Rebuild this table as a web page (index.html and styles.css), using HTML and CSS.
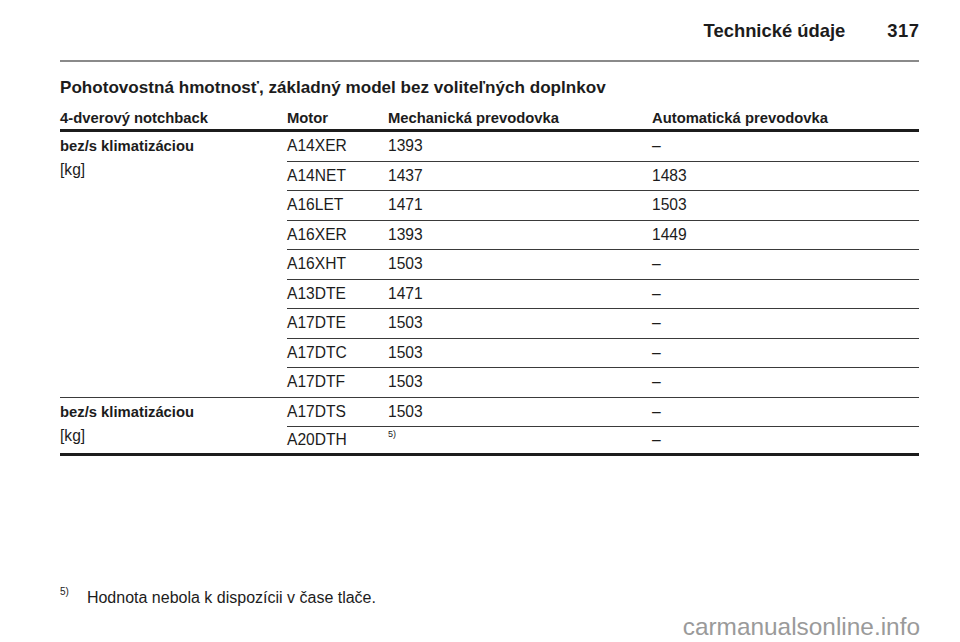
FILE: index.html
```html
<!DOCTYPE html>
<html lang="sk">
<head>
<meta charset="utf-8">
<title>Technické údaje 317</title>
<link rel="stylesheet" href="styles.css">
</head>
<body>
<div class="page">
  <header class="running-head">
    <span class="chapter">Technické údaje</span>
    <span class="pageno">317</span>
  </header>
  <h2 class="title">Pohotovostná hmotnosť, základný model bez voliteľných doplnkov</h2>
  <table class="weights">
    <thead>
      <tr>
        <th class="c1">4-dverový notchback</th>
        <th class="c2">Motor</th>
        <th class="c3">Mechanická prevodovka</th>
        <th class="c4">Automatická prevodovka</th>
      </tr>
    </thead>
    <tbody>
      <tr>
        <td class="c1 group" rowspan="9"><div class="lbl">bez/s klimatizáciou</div><div class="unit">[kg]</div></td>
        <td>A14XER</td><td>1393</td><td>–</td>
      </tr>
      <tr><td>A14NET</td><td>1437</td><td>1483</td></tr>
      <tr><td>A16LET</td><td>1471</td><td>1503</td></tr>
      <tr><td>A16XER</td><td>1393</td><td>1449</td></tr>
      <tr><td>A16XHT</td><td>1503</td><td>–</td></tr>
      <tr><td>A13DTE</td><td>1471</td><td>–</td></tr>
      <tr><td>A17DTE</td><td>1503</td><td>–</td></tr>
      <tr><td>A17DTC</td><td>1503</td><td>–</td></tr>
      <tr><td>A17DTF</td><td>1503</td><td>–</td></tr>
      <tr>
        <td class="c1 group last" rowspan="2"><div class="lbl">bez/s klimatizáciou</div><div class="unit">[kg]</div></td>
        <td>A17DTS</td><td>1503</td><td>–</td>
      </tr>
      <tr class="last-row"><td>A20DTH</td><td><sup class="fn">5)</sup></td><td>–</td></tr>
    </tbody>
  </table>
  <div class="spacer"></div>
  <footer class="footnote">
    <sup class="fn">5)</sup><span>Hodnota nebola k dispozícii v čase tlače.</span>
  </footer>
  <div class="watermark">carmanualsonline.info</div>
</div>
</body>
</html>
```

FILE: styles.css
```css
html, body {
  margin: 0;
  padding: 0;
  background: #ffffff;
}

body {
  font-family: "Liberation Sans", Arial, Helvetica, sans-serif;
  color: #1c1c1c;
  width: 960px;
  height: 642px;
  overflow: hidden;
}

.page {
  position: relative;
  height: 642px;
  padding: 0 41px 0 60px;
  box-sizing: border-box;
  display: flex;
  flex-direction: column;
}

.running-head {
  display: flex;
  justify-content: flex-end;
  align-items: baseline;
  gap: 42px;
  height: 62px;
  box-sizing: border-box;
  padding-top: 20px;
  border-bottom: 2px solid #8a8a8a;
  font-weight: bold;
  font-size: 18.4px;
  line-height: 22px;
}

.running-head .pageno {
  letter-spacing: 0.5px;
  margin-right: -0.5px;
}

.title {
  margin: 15px 0 0 0;
  font-size: 17.1px;
  line-height: 22px;
  font-weight: bold;
}

.weights {
  width: 100%;
  border-collapse: separate;
  border-spacing: 0;
  font-size: 15.6px;
  line-height: 18px;
  table-layout: fixed;
}

.weights th,
.weights td {
  box-sizing: border-box;
  padding: 0;
  text-align: left;
}

.weights th {
  font-weight: bold;
  font-size: 14.8px;
  height: 33px;
  vertical-align: bottom;
  padding-bottom: 2px;
  border-bottom: 3px solid #1c1c1c;
}

.weights th.c1 { width: 227px; }
.weights th.c2 { width: 101px; }
.weights th.c3 { width: 264px; }

.weights td {
  height: 29.5px;
  vertical-align: middle;
  border-bottom: 1px solid #3a3a3a;
}

.weights td.group {
  vertical-align: top;
  padding-top: 5px;
  line-height: 19px;
}

.weights td.group .lbl {
  font-weight: bold;
  font-size: 14.8px;
}

.weights td.group .unit {
  margin-top: 4px;
  font-size: 15.6px;
}

.weights tr.last-row td {
  height: 28.5px;
  border-bottom: 3px solid #1c1c1c;
}

.weights td.group.last {
  border-bottom: 3px solid #1c1c1c;
}

.fn {
  font-size: 9px;
  vertical-align: top;
  line-height: 1;
  position: relative;
  top: -1px;
}

.spacer { flex: 1; }

.footnote {
  display: flex;
  align-items: flex-start;
  gap: 18px;
  font-size: 16px;
  line-height: 18px;
  margin-bottom: 35px;
}

.footnote .fn {
  top: -2px;
  font-size: 10px;
}

.watermark {
  position: absolute;
  right: 40px;
  bottom: 1px;
  font-size: 24.4px;
  color: #9a9a9a;
}
```
